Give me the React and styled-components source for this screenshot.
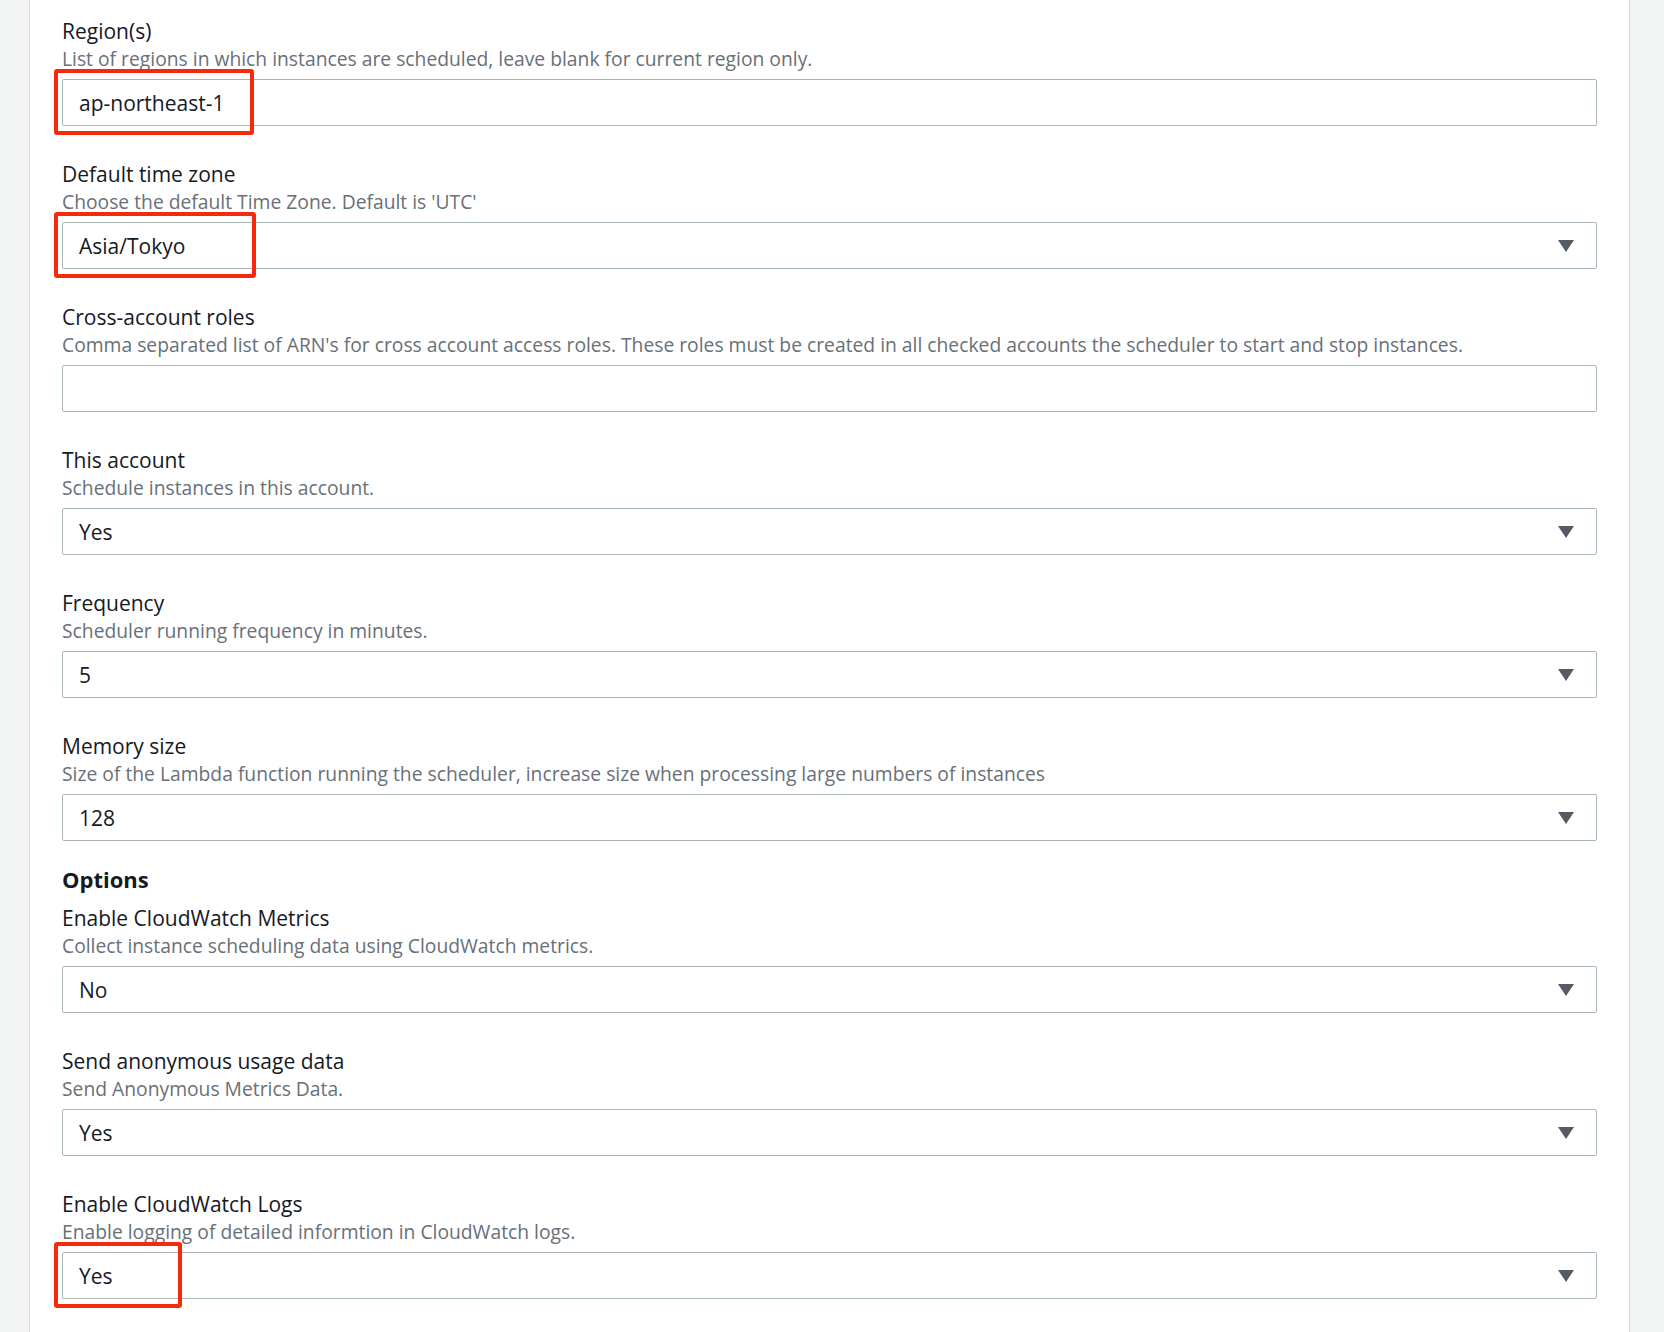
import React from 'react'
import styled, { createGlobalStyle } from 'styled-components'

const Global = createGlobalStyle`
  body { margin: 0; background: #f2f3f3; font-family: "Open Sans", "Noto Sans", sans-serif; color: #16191f; }
`

const Page = styled.div`
  display: flex;
  min-height: 1332px;
`

const Panel = styled.div`
  margin-left: 29px;
  width: 1601px;
  background: #fff;
  border-left: 1px solid #d5dbdb;
  border-right: 1px solid #d5dbdb;
  padding: 17px 32px 0 32px;
  box-sizing: border-box;
`

const Field = styled.div`
  margin-bottom: 34px;
`

const Label = styled.div`
  font-size: 21px;
  line-height: 28px;
`

const Desc = styled.div`
  font-size: 19.3px;
  line-height: 26px;
  color: #687078;
  margin-top: 1px;
`

const Box = styled.div`
  position: relative;
  margin-top: 7px;
  height: 47px;
  border: 1px solid #aab7b8;
  border-radius: 2px;
  box-sizing: border-box;
  display: flex;
  align-items: center;
  justify-content: space-between;
  padding: 0 22px 0 16px;
  font-size: 21px;
`

const Arrow = styled.div`
  width: 0;
  height: 0;
  border-left: 8px solid transparent;
  border-right: 8px solid transparent;
  border-top: 12px solid #545b64;
`

const Mark = styled.div`
  position: absolute;
  left: -9px;
  top: -11px;
  width: ${p => p.w}px;
  height: 66px;
  border: 4px solid #f52a0c;
  border-radius: 3px;
  box-sizing: border-box;
`

const Heading = styled.div`
  font-size: 22px;
  font-weight: 700;
  line-height: 28px;
  margin: -10px 0 11px;
`

const fields = [
  { label: 'Region(s)', desc: 'List of regions in which instances are scheduled, leave blank for current region only.', value: 'ap-northeast-1', mark: 200 },
  { label: 'Default time zone', desc: "Choose the default Time Zone. Default is 'UTC'", value: 'Asia/Tokyo', select: true, mark: 202 },
  { label: 'Cross-account roles', desc: "Comma separated list of ARN's for cross account access roles. These roles must be created in all checked accounts the scheduler to start and stop instances.", value: '' },
  { label: 'This account', desc: 'Schedule instances in this account.', value: 'Yes', select: true },
  { label: 'Frequency', desc: 'Scheduler running frequency in minutes.', value: '5', select: true },
  { label: 'Memory size', desc: 'Size of the Lambda function running the scheduler, increase size when processing large numbers of instances', value: '128', select: true },
]

const options = [
  { label: 'Enable CloudWatch Metrics', desc: 'Collect instance scheduling data using CloudWatch metrics.', value: 'No', select: true },
  { label: 'Send anonymous usage data', desc: 'Send Anonymous Metrics Data.', value: 'Yes', select: true },
  { label: 'Enable CloudWatch Logs', desc: 'Enable logging of detailed informtion in CloudWatch logs.', value: 'Yes', select: true, mark: 128 },
]

function Row({ f }) {
  return (
    <Field>
      <Label>{f.label}</Label>
      <Desc>{f.desc}</Desc>
      <Box>
        <span>{f.value}</span>
        {f.select && <Arrow />}
        {f.mark && <Mark w={f.mark} />}
      </Box>
    </Field>
  )
}

export default function App() {
  return (
    <Page>
      <Global />
      <Panel>
        {fields.map(f => <Row key={f.label} f={f} />)}
        <Heading>Options</Heading>
        {options.map(f => <Row key={f.label} f={f} />)}
      </Panel>
    </Page>
  )
}
